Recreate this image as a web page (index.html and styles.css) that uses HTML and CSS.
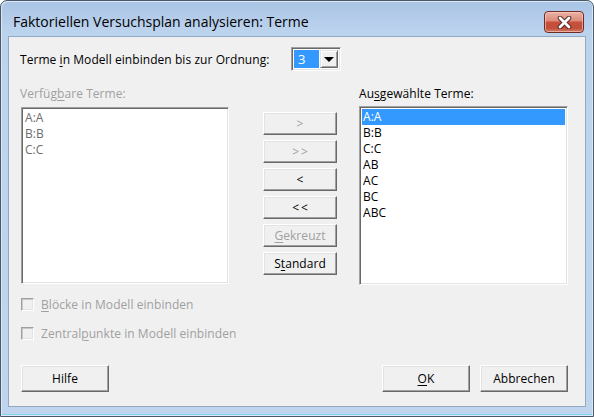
FILE: index.html
```html
<!DOCTYPE html>
<html lang="de">
<head>
<meta charset="utf-8">
<title>Faktoriellen Versuchsplan analysieren: Terme</title>
<link rel="stylesheet" href="styles.css">
</head>
<body>
<div class="window">
  <div class="titlebar">
    <span class="title">Faktoriellen Versuchsplan analysieren: Terme</span>
    <span class="close">
      <svg width="19" height="13" viewBox="0 0 19 13">
        <path d="M5 2 L14 11 M14 2 L5 11" stroke="#5a2a24" stroke-width="4.6" stroke-linecap="round"/>
        <path d="M5 2 L14 11 M14 2 L5 11" stroke="#ffffff" stroke-width="2.8" stroke-linecap="round"/>
      </svg>
    </span>
  </div>
  <div class="client">
    <div class="order-row">
      <span class="order-label">Terme <u>i</u>n Modell einbinden bis zur Ordnung:</span>
      <span class="combo">
        <span class="combo-value">3</span>
        <span class="combo-btn"><span class="tri"></span></span>
      </span>
    </div>
    <div class="lists">
      <div class="col col-left">
        <div class="list-label disabled">Verfüg<u>b</u>are Terme:</div>
        <div class="listbox listbox-left">
          <div class="item">A:A</div>
          <div class="item">B:B</div>
          <div class="item">C:C</div>
        </div>
      </div>
      <div class="col col-mid">
        <button class="btn btn-small arrows" disabled>&gt;</button>
        <button class="btn btn-small arrows" disabled>&gt;&gt;</button>
        <button class="btn btn-small arrows">&lt;</button>
        <button class="btn btn-small arrows">&lt;&lt;</button>
        <button class="btn btn-small" disabled><u>G</u>ekreuzt</button>
        <button class="btn btn-small">S<u>t</u>andard</button>
      </div>
      <div class="col col-right">
        <div class="list-label">Au<u>s</u>gewählte Terme:</div>
        <div class="listbox listbox-right">
          <div class="item selected">A:A</div>
          <div class="item">B:B</div>
          <div class="item">C:C</div>
          <div class="item">AB</div>
          <div class="item">AC</div>
          <div class="item">BC</div>
          <div class="item">ABC</div>
        </div>
      </div>
    </div>
    <div class="checks">
      <label class="check disabled"><span class="box"></span><span><u>B</u>löcke in Modell einbinden</span></label>
      <label class="check disabled"><span class="box"></span><span>Zentral<u>p</u>unkte in Modell einbinden</span></label>
    </div>
    <div class="footer">
      <button class="btn btn-big">Hilfe</button>
      <div class="footer-right">
        <button class="btn btn-big"><u>O</u>K</button>
        <button class="btn btn-big">Abbrechen</button>
      </div>
    </div>
  </div>
</div>
</body>
</html>
```
FILE: styles.css
```css
* { box-sizing: border-box; }
html, body { margin: 0; padding: 0; background: #ffffff; }
body {
  width: 594px;
  height: 417px;
  overflow: hidden;
  font-family: "Open Sans", "Noto Sans", "DejaVu Sans", sans-serif;
  font-size: 12px;
  letter-spacing: 0.06px;
  color: #000;
}
.window {
  width: 594px;
  height: 417px;
  border: 1px solid #4a5868;
  border-radius: 7px 7px 0 0;
  background: linear-gradient(to bottom, #a9c4e4 0px, #bcd3ee 30px, #bfd5ee 100%);
  box-shadow: inset 1px 1px 0 #dbe8f6, inset -1px -1px 0 #dbe8f6;
  display: flex;
  flex-direction: column;
  position: relative;
}
.window::after {
  content: "";
  position: absolute;
  left: 1px;
  right: 1px;
  bottom: 1px;
  height: 1px;
  background: #7fd4f0;
}
.titlebar {
  height: 35px;
  display: flex;
  align-items: flex-start;
  justify-content: space-between;
  padding: 0 9px 0 12px;
}
.title {
  font-family: "Open Sans", "Noto Sans", sans-serif;
  font-size: 14px;
  color: #000;
  margin-top: 11px;
  letter-spacing: 0;
}
.close {
  margin-top: 10px;
  width: 40px;
  height: 22px;
  border: 1px solid #6e2c25;
  border-radius: 4px;
  background: linear-gradient(to bottom, #eab3a6 0%, #dc8a78 45%, #c7503c 50%, #c14e3a 80%, #d37d65 100%);
  box-shadow: inset 0 0 0 1px rgba(255, 210, 200, 0.6);
  display: flex;
  align-items: center;
  justify-content: center;
}
.close svg { display: block; }
.client {
  margin: 0 7px 9px 7px;
  flex: 1;
  background: #f0f0f0;
  border: 1px solid #93a9c3;
  padding: 10px 0 0 11px;
  display: flex;
  flex-direction: column;
}
.order-row {
  display: flex;
  align-items: center;
  height: 24px;
}
.order-label {
  width: 271px;
}
.combo {
  display: flex;
  width: 50px;
  height: 24px;
  border: 1px solid;
  border-color: #a0a0a0 #ffffff #ffffff #a0a0a0;
  box-shadow: inset 1px 1px 0 #696969, inset -1px -1px 0 #e3e3e3;
  background: #fff;
  padding: 2px;
}
.combo-value {
  flex: 1;
  background: #3399ff;
  color: #fff;
  padding-left: 4px;
  line-height: 18px;
  font-size: 13px;
}
.combo-btn {
  width: 18px;
  margin-left: 1px;
  background: #f0f0f0;
  border: 1px solid;
  border-color: #e3e3e3 #696969 #696969 #e3e3e3;
  box-shadow: inset 1px 1px 0 #fff, inset -1px -1px 0 #a0a0a0;
  display: flex;
  align-items: center;
  justify-content: center;
}
.tri {
  width: 0;
  height: 0;
  border-left: 5px solid transparent;
  border-right: 5px solid transparent;
  border-top: 5px solid #000;
}
.lists {
  display: grid;
  grid-template-columns: 209px 74px 209px;
  column-gap: 34px;
  margin-top: 15px;
}
.list-label {
  height: 16px;
  line-height: 16px;
}
.disabled { color: #a0a0a0; }
.col-left .listbox { margin-left: 1px; width: 208px; height: 177px; margin-top: 5px; }
.col-right { margin-left: -12px; }
.col-right .listbox { width: 209px; height: 179px; margin-top: 4px; }
.listbox {
  background: #fff;
  border: 1px solid;
  border-color: #a0a0a0 #ffffff #ffffff #a0a0a0;
  box-shadow: inset 1px 1px 0 #696969, inset -1px -1px 0 #e3e3e3;
  padding: 2px 2px;
}
.listbox-left .item { color: #6d6d6d; }
.item {
  height: 16px;
  line-height: 16px;
  padding-left: 1px;
  font-size: 12px;
}
.item.selected {
  background: #3399ff;
  color: #fff;
}
.col-mid {
  display: flex;
  flex-direction: column;
  gap: 5px;
  padding-top: 26px;
}
.btn {
  font-family: inherit;
  font-size: 12px;
  letter-spacing: 0.06px;
  color: #000;
  background: #f0f0f0;
  border: 1px solid;
  border-color: #ffffff #696969 #696969 #ffffff;
  box-shadow: inset -1px -1px 0 #a0a0a0, inset 1px 1px 0 #e3e3e3;
  padding: 0;
  margin: 0;
  border-radius: 0;
}
.btn.arrows { letter-spacing: 2px; text-indent: 2px; }
.btn:disabled { color: #a0a0a0; }
.btn-small { width: 74px; height: 23px; }
.btn-big { width: 88px; height: 27px; }
.checks {
  display: flex;
  flex-direction: column;
  gap: 15px;
  margin-top: 12px;
  padding-left: 1px;
}
.check {
  display: flex;
  align-items: center;
  gap: 7px;
  height: 14px;
}
.box {
  width: 13px;
  height: 13px;
  background: #f0f0f0;
  border: 1px solid;
  border-color: #a0a0a0 #ffffff #ffffff #a0a0a0;
  box-shadow: inset 1px 1px 0 #c8c8c8, inset -1px -1px 0 #e3e3e3;
}
.footer {
  display: flex;
  justify-content: space-between;
  margin-top: auto;
  margin-bottom: 14px;
  padding-left: 1px;
  padding-right: 17px;
}
.footer-right {
  display: flex;
  gap: 10px;
}
u { text-decoration-thickness: 1px; text-underline-offset: 2px; }
```
